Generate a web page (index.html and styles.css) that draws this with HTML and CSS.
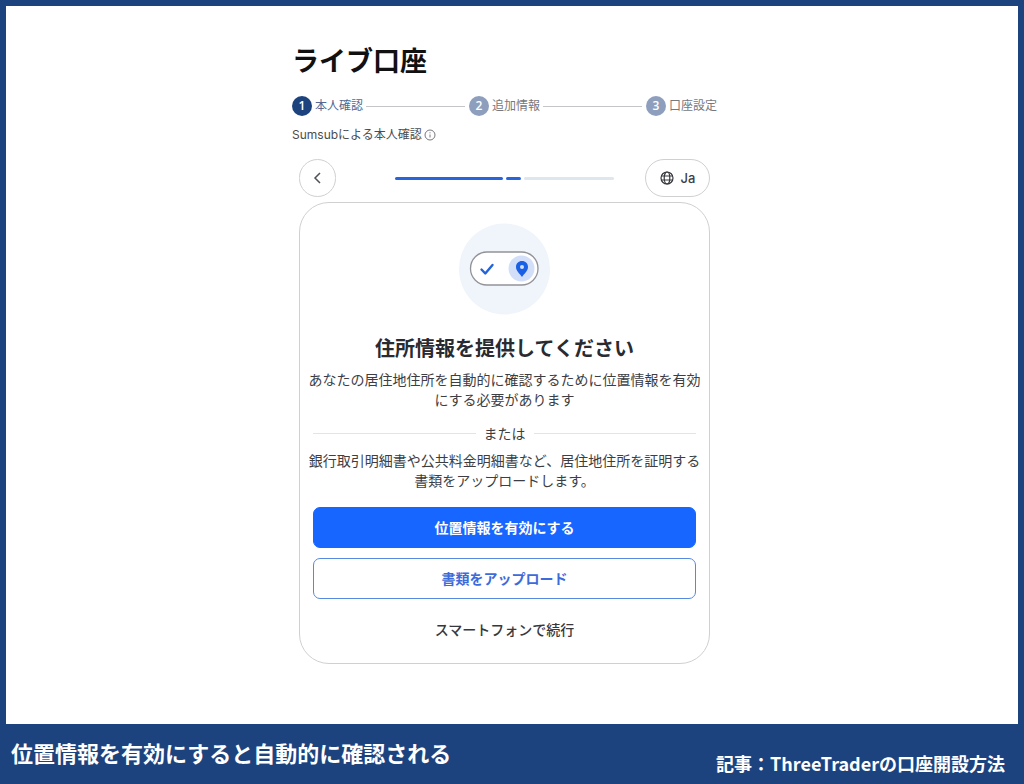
FILE: index.html
```html
<!DOCTYPE html>
<html lang="ja">
<head>
<meta charset="utf-8">
<meta name="viewport" content="width=device-width, initial-scale=1">
<title>ライブ口座</title>
<link rel="stylesheet" href="styles.css">
</head>
<body>
<div class="frame">
  <main class="sheet">
    <div class="column">
      <h1 class="title">ライブ口座</h1>
      <ol class="steps">
        <li class="step step-current"><span class="step-number">1</span><span class="step-label">本人確認</span></li>
        <li class="step"><span class="step-number">2</span><span class="step-label">追加情報</span></li>
        <li class="step"><span class="step-number">3</span><span class="step-label">口座設定</span></li>
      </ol>
      <p class="provider">Sumsubによる本人確認
        <svg class="info" viewBox="0 0 12 12" aria-hidden="true"><circle cx="6" cy="6" r="5"/><path d="M6 5.5v3M6 3.3v1"/></svg>
      </p>
      <section class="widget">
        <div class="toolbar">
          <button class="back" type="button" aria-label="戻る">
            <svg viewBox="0 0 16 16" aria-hidden="true"><path d="M10 3L5 8l5 5"/></svg>
          </button>
          <div class="progress" role="img" aria-label="進行状況">
            <span class="done"></span><span class="active"></span><span class="rest"></span>
          </div>
          <button class="language" type="button">
            <svg viewBox="0 0 14 14" aria-hidden="true"><circle cx="7" cy="7" r="6"/><ellipse cx="7" cy="7" rx="2.8" ry="6"/><path d="M1.4 5h11.2M1.4 9h11.2"/></svg>
            Ja
          </button>
        </div>
        <div class="card">
          <div class="badge">
            <svg viewBox="1 0 92 92" aria-hidden="true">
              <circle cx="46.5" cy="46" r="45.5" fill="#f0f4fb"/>
              <rect x="12.5" y="29" width="67.5" height="33" rx="16.5" fill="#fff" stroke="#929399" stroke-width="1.3"/>
              <circle cx="63.5" cy="45.5" r="13" fill="#d3dff9"/>
              <path d="M23.5 46.5l3.8 4 7.2-8.5" fill="none" stroke="#2463d8" stroke-width="2.4" stroke-linecap="round" stroke-linejoin="round"/>
              <path fill-rule="evenodd" d="M64 38c-3.5 0-6 2.6-6 5.9 0 4.1 3.8 6.6 6 10 2.200-3.400 6-5.900 6-10 0-3.300-2.500-5.900-6-5.900zm0 4a2 2 0 1 1 0 4 2 2 0 0 1 0-4z" fill="#1b5fe4"/>
            </svg>
          </div>
          <h2 class="heading">住所情報を提供してください</h2>
          <p class="copy">あなたの居住地住所を自動的に確認するために位置情報を有効<br>にする必要があります</p>
          <div class="divider">または</div>
          <p class="copy">銀行取引明細書や公共料金明細書など、居住地住所を証明する<br>書類をアップロードします。</p>
          <div class="actions">
            <button class="action primary" type="button">位置情報を有効にする</button>
            <button class="action outline" type="button">書類をアップロード</button>
            <button class="action plain" type="button">スマートフォンで続行</button>
          </div>
        </div>
      </section>
    </div>
  </main>
  <footer class="caption">
    <p class="caption-text">位置情報を有効にすると自動的に確認される</p>
    <p class="source">記事：ThreeTraderの口座開設方法</p>
  </footer>
</div>
</body>
</html>
```
FILE: styles.css
```css
* {
  box-sizing: border-box;
}

body {
  margin: 0;
  background: #1d437f;
  color: #3c3e44;
  font-family: "Noto Sans CJK JP", sans-serif;
  font-size: 14px;
  line-height: 20px;
}

h1, h2, p, ol {
  margin: 0;
  padding: 0;
}

button {
  font: inherit;
  color: inherit;
  cursor: pointer;
}

.frame {
  display: flex;
  flex-direction: column;
  min-height: 100vh;
  padding: 6px 6px 0;
}

.sheet {
  flex: 1;
  padding: 36px 15px 56px 0;
  background: #fff;
}

.column {
  max-width: 425px;
  margin: 0 auto;
}

.title {
  color: #111;
  font-size: 27px;
  line-height: 36px;
}

.steps {
  display: flex;
  gap: 4px;
  margin-top: 17px;
  list-style: none;
}

.step {
  display: flex;
  flex: 1 1 auto;
  align-items: center;
  gap: 3px;
  color: #77787d;
  font-size: 12px;
}

.step:last-child {
  flex: none;
}

.step:not(:last-child)::after {
  content: "";
  flex: 1;
  height: 1px;
  background: #c4c5c9;
}

.step-label {
  padding-bottom: 2px;
}

.step-number {
  width: 20px;
  height: 20px;
  border-radius: 50%;
  background: #8e9fbe;
  color: #fff;
  font-family: "Open Sans", sans-serif;
  font-weight: 600;
  text-align: center;
}

.step-current {
  color: #526892;
}

.step-current .step-number {
  background: #1d437f;
}

.provider {
  display: flex;
  align-items: center;
  gap: 2px;
  margin-top: 7px;
  color: #4b4c50;
  font-family: Inter, "Noto Sans CJK JP", sans-serif;
  font-size: 12px;
  line-height: 22px;
}

.info {
  width: 12px;
  height: 12px;
  fill: none;
  stroke: #77787d;
}

.widget {
  padding: 0 7px;
}

.toolbar {
  display: flex;
  align-items: center;
  justify-content: space-between;
  margin-top: 13px;
}

.back,
.language {
  display: flex;
  align-items: center;
  justify-content: center;
  height: 38px;
  padding: 0;
  border: 1px solid #d0d0d2;
  border-radius: 19px;
  background: #fff;
}

.back {
  width: 37px;
}

.back svg {
  width: 16px;
  height: 16px;
  fill: none;
  stroke: #505157;
  stroke-width: 1.5;
}

.language {
  gap: 7px;
  width: 65px;
  font-family: Inter, sans-serif;
  font-size: 13px;
  font-weight: 500;
}

.language svg {
  width: 14px;
  height: 14px;
  fill: none;
  stroke: #37383d;
  stroke-width: 1.2;
}

.progress {
  display: flex;
  gap: 3px;
  width: 219px;
  margin-left: 28px;
}

.progress span {
  height: 3px;
  border-radius: 2px;
}

.done {
  flex: 108;
  background: #2865dc;
}

.active {
  flex: 15;
  background: #2865dc;
}

.rest {
  flex: 90;
  background: #e0e6ee;
}

.card {
  display: flex;
  flex-direction: column;
  margin-top: 5px;
  padding: 20px 8px 13px;
  border: 1px solid #d0d0d2;
  border-radius: 30px;
  text-align: center;
}

.badge svg {
  display: block;
  width: 92px;
  height: 92px;
  margin: 0 auto;
}

.heading {
  margin-top: 19px;
  color: #292b31;
  font-size: 20px;
  line-height: 28px;
}

.copy {
  margin-top: 7px;
}

.divider {
  display: flex;
  align-items: center;
  gap: 8px;
  margin: 14px 5px 0;
}

.divider::before,
.divider::after {
  content: "";
  flex: 1;
  height: 1px;
  background: #e3e4e6;
}

.actions {
  display: flex;
  flex-direction: column;
  gap: 10px;
  margin: 17px 5px 0;
}

.action {
  height: 41px;
  padding: 0 0 1px;
  border: 1px solid transparent;
  border-radius: 7px;
  background: #fff;
  font-weight: 700;
}

.primary {
  border-color: #1766ff;
  background: #1766ff;
  color: #fff;
}

.outline {
  border-color: #568ade;
  color: #3d6bdb;
}

.plain {
  color: #37383d;
  font-weight: 500;
}

.caption {
  display: flex;
  align-items: flex-start;
  justify-content: space-between;
  gap: 16px;
  padding: 12px 13px 6px 5px;
  color: #fff;
  font-weight: 700;
}

.caption-text {
  font-size: 22px;
  line-height: 32px;
}

.source {
  padding-top: 12px;
  font-size: 18px;
  line-height: 30px;
}
```
